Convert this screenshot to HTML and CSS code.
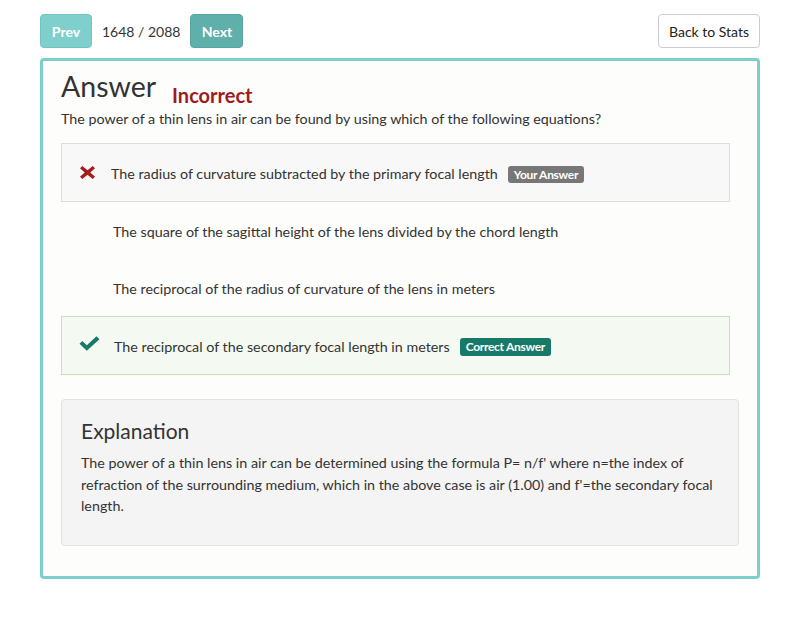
FILE: index.html
```html
<!DOCTYPE html>
<html>
<head>
<meta charset="utf-8">
<link rel="stylesheet" href="styles.css">
</head>
<body>
<div class="page">
  <div class="topbar">
    <button class="btn btn-prev">Prev</button>
    <span class="counter">1648 / 2088</span>
    <button class="btn btn-next">Next</button>
    <button class="btn btn-back">Back to Stats</button>
  </div>
  <div class="card">
    <div class="heading">
      <h1 class="title">Answer</h1>
      <span class="status">Incorrect</span>
    </div>
    <p class="question">The power of a thin lens in air can be found by using which of the following equations?</p>
    <div class="options">
      <div class="option option-wrong">
        <span class="icon">
          <svg width="17" height="15" viewBox="0 0 17 15"><path d="M1 3.2 L3.3 1 L8.5 5.3 L13.7 1 L16 3.2 L11.3 7.5 L16 11.8 L13.7 14 L8.5 9.7 L3.3 14 L1 11.8 L5.7 7.5 Z" fill="#a31d1d"/></svg>
        </span>
        <span class="text">The radius of curvature subtracted by the primary focal length</span>
        <span class="badge badge-gray">Your Answer</span>
      </div>
      <div class="option">
        <span class="icon"></span>
        <span class="text">The square of the sagittal height of the lens divided by the chord length</span>
      </div>
      <div class="option">
        <span class="icon"></span>
        <span class="text">The reciprocal of the radius of curvature of the lens in meters</span>
      </div>
      <div class="option option-right">
        <span class="icon">
          <svg width="21" height="15" viewBox="0 0 21 15"><path d="M0.5 7.8 L3.3 5 L7.8 9.3 L17.5 0.3 L20.5 3.2 L7.8 14.8 Z" fill="#1a7a6a"/></svg>
        </span>
        <span class="text">The reciprocal of the secondary focal length in meters</span>
        <span class="badge badge-green">Correct Answer</span>
      </div>
    </div>
    <div class="explanation">
      <h2 class="exp-title">Explanation</h2>
      <p class="exp-body">The power of a thin lens in air can be determined using the formula P= n/f' where n=the index of refraction of the surrounding medium, which in the above case is air (1.00) and f'=the secondary focal length.</p>
    </div>
  </div>
</div>
</body>
</html>
```

FILE: styles.css
```css
* { box-sizing: border-box; }
body {
  margin: 0;
  background: #ffffff;
  font-family: Lato, "Open Sans", sans-serif;
  color: #333333;
}
.page {
  width: 720px;
  margin-left: 40px;
  padding-top: 14px;
}
.topbar {
  display: flex;
  align-items: center;
  height: 34px;
}
.btn {
  font-family: Lato, sans-serif;
  height: 34px;
  border-radius: 4px;
  font-size: 14px;
  padding: 0;
  cursor: pointer;
}
.btn-prev, .btn-next {
  width: 52px;
  color: #ffffff;
  font-weight: bold;
}
.btn-prev {
  background: #7fcfcd;
  border: 1px solid #71c4c2;
}
.btn-next {
  width: 53px;
  background: #5fafab;
  border: 1px solid #57a6a2;
}
.counter {
  font-size: 14px;
  margin: 0 10px;
  color: #333;
}
.btn-back {
  margin-left: auto;
  width: 102px;
  background: #ffffff;
  border: 1px solid #cccccc;
  color: #222;
  font-size: 14px;
}
.card {
  margin-top: 10px;
  border: 3px solid #7ecfcb;
  border-radius: 4px;
  background: #fdfdfb;
  padding: 7px 18px 30px 18px;
}
.heading {
  display: flex;
  align-items: flex-end;
  height: 36px;
}
.title {
  margin: 0;
  font-size: 28.5px;
  font-weight: normal;
  line-height: 36px;
  color: #333;
}
.status {
  margin-left: 16px;
  font-size: 20px;
  font-weight: bold;
  color: #a01b1b;
  line-height: 26px;
  position: relative;
  top: 4px;
}
.question {
  margin: 5px 0 14px 0;
  font-size: 14.3px;
  line-height: 20px;
}
.options {
  width: 669px;
}
.option {
  display: flex;
  align-items: center;
  height: 57px;
  padding-left: 17px;
  font-size: 14.3px;
  border: 1px solid transparent;
}
.option .text, .option .badge { position: relative; top: 1.5px; }
.option-wrong {
  background: #f8f8f8;
  border-color: #dddddd;
  height: 59px;
}
.option-right {
  background: #f4faf2;
  border-color: #c3e6b9;
  height: 59px;
}
.icon {
  width: 34px;
  display: flex;
  align-items: center;
}
.option-wrong .icon { width: 32px; }
.option-right .icon { width: 35px; margin-top: -4px; }
.option .text { line-height: 18px; }
.badge {
  margin-left: 10px;
  color: #ffffff;
  font-weight: bold;
  font-size: 12px;
  letter-spacing: -0.3px;
  padding: 2px 6px;
  border-radius: 3px;
  line-height: 13px;
}
.badge-gray { background: #777777; }
.badge-green { background: #177a69; padding: 2px 6px 2px 6px; line-height: 14px; }
.explanation {
  margin-top: 24px;
  background: #f4f4f4;
  border: 1px solid #e2e2e2;
  border-radius: 4px;
  padding: 18px 19px 28px 19px;
}
.exp-title {
  margin: 0 0 8px 0;
  font-size: 21px;
  font-weight: normal;
  line-height: 26px;
  color: #333;
}
.exp-body {
  margin: 0;
  font-size: 14.3px;
  line-height: 21.5px;
}
```
